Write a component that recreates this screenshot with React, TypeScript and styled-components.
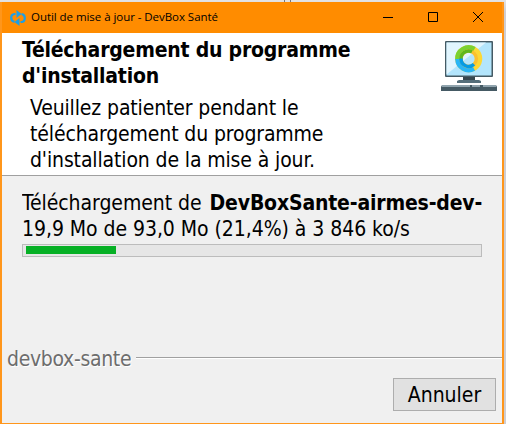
import React from "react";
import styled, { createGlobalStyle } from "styled-components";

const GlobalStyle = createGlobalStyle`
  * { box-sizing: border-box; }
  body { margin: 0; background: #d2d0d4; overflow: hidden; }
`;

const Desktop = styled.main`
  width: 506px;
  height: 424px;
  background: linear-gradient(#e4e4e4, #cfcdd1 12px);
  font: condensed 21px/26px "DejaVu Sans", "DejaVu Sans Condensed", sans-serif;
  letter-spacing: -0.13px;
  color: #000;
  cursor: default;
`;

const BackgroundEdge = styled.div`
  display: flex;
  height: 2px;
  padding-left: 284px;
  gap: 5px;
`;

const EdgeMark = styled.span`
  width: 1px;
  height: 2px;
  background: #77777c;
`;

const Window = styled.section`
  display: flex;
  flex-direction: column;
  width: 504px;
  height: 422px;
  border: 2px solid #ff961b;
  border-top: 0;
  border-bottom-width: 1px;
  background: #f0f0f0;
`;

const TitleBar = styled.header`
  display: flex;
  align-items: center;
  height: 31px;
  flex: none;
  padding-left: 8px;
  background: #ff8c00;
`;

const WindowTitle = styled.h1`
  flex: 1;
  margin: 0 0 1px 5px;
  font: 400 11.5px/16px "Open Sans", "Noto Sans", sans-serif;
  letter-spacing: -0.05px;
`;

const ControlIcon = styled.svg`
  width: 10px;
  height: 10px;
  margin: 0 0 1px 35px;
  fill: none;
  stroke: #000;
`;

const Controls = styled.div`
  display: flex;
  padding-right: 19px;
`;

const Intro = styled.div`
  display: flex;
  justify-content: space-between;
  height: 143px;
  flex: none;
  padding: 4px 5px 0 20px;
  background: #fff;
  border-bottom: 1px solid #a0a0a0;
`;

const Heading = styled.h2`
  width: 340px;
  margin: 0;
  font-size: 21px;
  font-weight: 700;
  letter-spacing: -0.21px;
`;

const Description = styled.p`
  width: 320px;
  margin: 6px 0 0 8px;
`;

const Computer = styled.svg`
  width: 56px;
  height: 52px;
  margin-top: 3px;
`;

const Content = styled.div`
  flex: 1;
  padding: 14px 20px 0;
`;

const StatusLine = styled.div`
  height: 26px;
  overflow: hidden;
  white-space: nowrap;
  letter-spacing: -0.05px;
`;

const FileName = styled.b`
  margin-left: 2px;
  letter-spacing: -0.17px;
`;

const ProgressTrack = styled.div`
  height: 13px;
  margin-top: 2px;
  padding: 1px 3px 2px;
  border: 1px solid #bcbcbc;
  background: #e6e6e6;
`;

const ProgressFill = styled.div`
  width: 90px;
  height: 8px;
  background: #06b025;
`;

const Branding = styled.div`
  display: flex;
  height: 26px;
  flex: none;
  padding-left: 5px;
  color: #6d6d6d;
  text-shadow: 1px 1px 0 #fff;
  letter-spacing: -0.33px;
`;

const Rule = styled.div`
  flex: 1;
  height: 2px;
  margin: 11px 0 0 5px;
  border-top: 1px solid #a0a0a0;
  background: #fff;
`;

const Footer = styled.footer`
  display: flex;
  justify-content: flex-end;
  height: 51px;
  flex: none;
  padding: 6px 6px 0 0;
`;

const Button = styled.button`
  width: 103px;
  height: 33px;
  padding: 0;
  border: 1px solid #adadad;
  background: #e1e1e1;
  color: #000;
  font: inherit;
  letter-spacing: 0;
`;

const SyncIcon = () => (
  <svg width="16" height="16" viewBox="0 0 16 16" fill="none" stroke="#1c9fe6" strokeWidth="2.200">
    <path d="M5.500 4H4.500Q1.200 4.200 1.200 7.500Q1.200 11.300 4.500 11.800" />
    <path d="M10.500 12H11.500Q14.800 11.800 14.800 8Q14.800 4.500 11.500 4M7 4H8M9 12H8" />
    <path d="M6.500 0L11.500 4L6.500 8ZM9.500 8L4.500 12L9.500 16Z" fill="#1c9fe6" stroke="none" />
  </svg>
);

const ComputerIcon = () => (
  <Computer viewBox="0 0 56 52">
    <rect x="4" y="1" width="48" height="36" rx="1" fill="#455a64" />
    <rect x="5.500" y="2.500" width="45" height="33" fill="#b3e5fc" />
    <path d="M5.500 2.500H45L5.500 34.500Z" fill="#e1f5fe" />
    <g fill="none" strokeWidth="4.500">
      <circle cx="27.700" cy="18.700" r="11.300" stroke="#fdd835" />
      <path d="M16.400 19.500A11.300 11.300 0 0 1 33.500 9" stroke="#7bd132" />
      <path d="M16.400 19A11.300 11.300 0 0 0 33 28.700" stroke="#29b6f6" />
    </g>
    <g fill="none" strokeWidth="3.500">
      <circle cx="27.700" cy="18.700" r="7.700" stroke="#fbc02d" />
      <path d="M20 19.500A7.700 7.700 0 0 1 31 11.750" stroke="#5eb81e" />
      <path d="M20 18.500A7.700 7.700 0 0 0 33 24.300" stroke="#039be5" />
    </g>
    <path d="M22 37H34V40H22Z" fill="#37474f" />
    <path d="M18 40H38L40 41V43H16V41Z" fill="#546e7a" />
    <path d="M1 45H55L56 47V51H0V47Z" fill="#455a64" />
    <path d="M1 45H29V47H1ZM31 45H39V47H31ZM42 45H55V47H42Z" fill="#90a4ae" />
  </Computer>
);

export default function App() {
  return (
    <>
      <GlobalStyle />
      <Desktop>
        <BackgroundEdge><EdgeMark /><EdgeMark /></BackgroundEdge>
        <Window>
          <TitleBar>
            <SyncIcon />
            <WindowTitle>Outil de mise à jour - DevBox Santé</WindowTitle>
            <Controls>
              <ControlIcon><path d="M0 5.500H10" /></ControlIcon>
              <ControlIcon><path d="M.5 .5H9.500V9.500H.5Z" /></ControlIcon>
              <ControlIcon><path d="M0 0L10 10M10 0L0 10" /></ControlIcon>
            </Controls>
          </TitleBar>
          <Intro>
            <div>
              <Heading>Téléchargement du programme d'installation</Heading>
              <Description>
                Veuillez patienter pendant le téléchargement du programme d'installation de la mise à jour.
              </Description>
            </div>
            <ComputerIcon />
          </Intro>
          <Content>
            <StatusLine>Téléchargement de <FileName>DevBoxSante-airmes-dev-</FileName></StatusLine>
            <StatusLine>19,9 Mo de 93,0 Mo (21,4%) à 3 846 ko/s</StatusLine>
            <ProgressTrack><ProgressFill /></ProgressTrack>
          </Content>
          <Branding>devbox-sante<Rule /></Branding>
          <Footer><Button>Annuler</Button></Footer>
        </Window>
      </Desktop>
    </>
  );
}
